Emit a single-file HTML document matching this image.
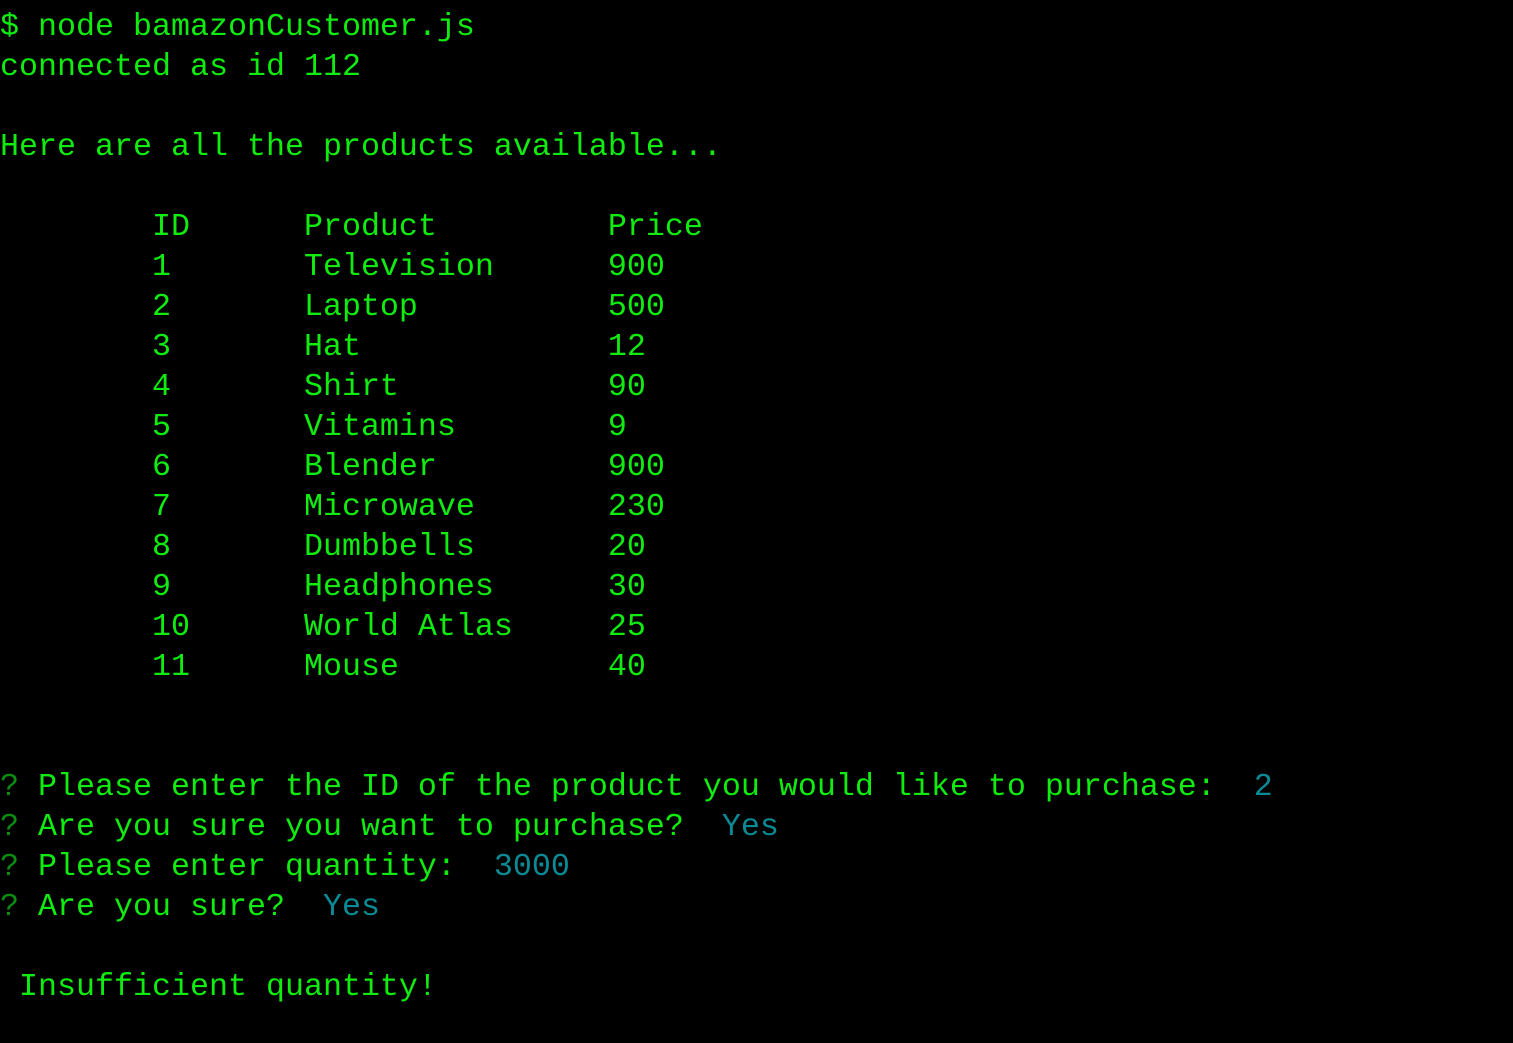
<!DOCTYPE html>
<html><head><meta charset="utf-8"><style>
html,body{margin:0;padding:0;background:#000;width:1513px;height:1043px;overflow:hidden}
pre{position:absolute;left:0;top:7px;margin:0;font-family:"Liberation Mono",monospace;font-size:31.67px;line-height:40px;color:#10ec10;white-space:pre}
.q{color:#0c8c0c}.a{color:#0a8a94}
</style></head><body><pre>$ node bamazonCustomer.js
connected as id 112

Here are all the products available...

        ID      Product         Price
        1       Television      900
        2       Laptop          500
        3       Hat             12
        4       Shirt           90
        5       Vitamins        9
        6       Blender         900
        7       Microwave       230
        8       Dumbbells       20
        9       Headphones      30
        10      World Atlas     25
        11      Mouse           40


<span class="q">?</span> Please enter the ID of the product you would like to purchase:  <span class="a">2</span>
<span class="q">?</span> Are you sure you want to purchase?  <span class="a">Yes</span>
<span class="q">?</span> Please enter quantity:  <span class="a">3000</span>
<span class="q">?</span> Are you sure?  <span class="a">Yes</span>

 Insufficient quantity!</pre></body></html>
